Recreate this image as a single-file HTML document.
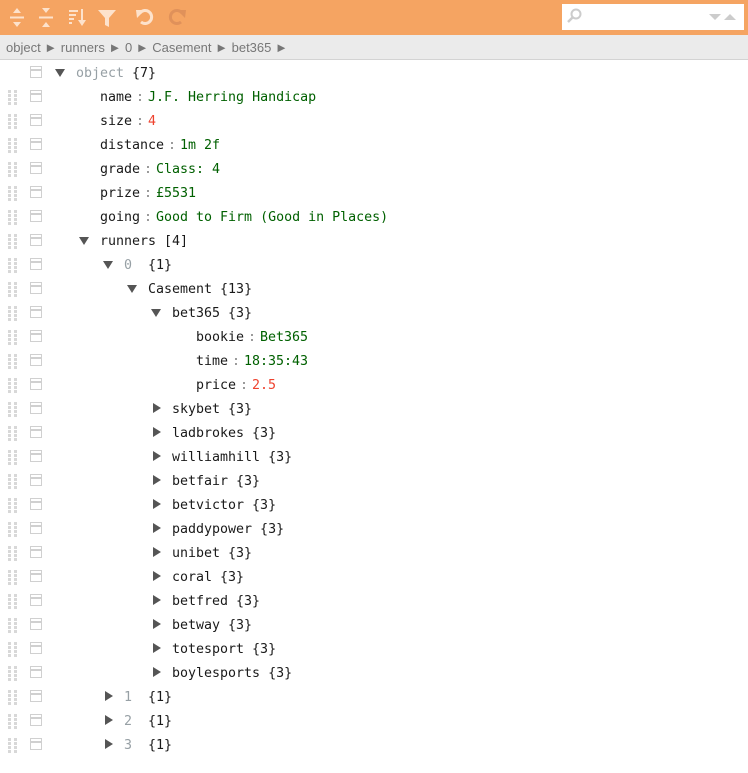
<!DOCTYPE html>
<html><head><meta charset="utf-8"><style>
*{margin:0;padding:0;box-sizing:border-box}
body{width:748px;height:773px;background:#fff;overflow:hidden;font-family:"DejaVu Sans Mono",monospace;font-size:13.3px;color:#1a1a1a;position:relative}
.tb{position:absolute;left:0;top:0;width:748px;height:35px;background:#f5a462}
.search{position:absolute;left:562px;top:4px;width:182px;height:26px;background:#fff}
.bc{position:absolute;left:0;top:35px;width:748px;height:25px;background:#ebebeb;border-bottom:1px solid #d3d3d3;font-family:"Liberation Sans",sans-serif;font-size:13px;color:#777;line-height:25px;padding-left:6px;white-space:pre}
.rows{position:absolute;left:0;top:60px;width:748px}
.r{position:relative;height:24px;line-height:24px;white-space:pre}
.r span{position:absolute;top:2px}
.dg{position:absolute;left:8px;top:6px;width:2.5px;height:2.5px;background:#d8d8d8;box-shadow:6px 0 #d8d8d8,0 4px #d8d8d8,6px 4px #d8d8d8,0 8px #d8d8d8,6px 8px #d8d8d8,0 12px #d8d8d8,6px 12px #d8d8d8}
.cb{position:absolute;left:30px;top:6px;width:12px;height:12px;border:1.5px solid #d0d0d0}
.cb:after{content:"";position:absolute;left:0;right:0;top:2px;height:1.5px;background:#d0d0d0}
.td,.tr{position:absolute;width:0;height:0}
.td{top:9px;border-left:5px solid transparent;border-right:5px solid transparent;border-top:8px solid #555}
.tr{top:7px;border-top:5px solid transparent;border-bottom:5px solid transparent;border-left:8px solid #555}
.s{color:#006000}.n{color:#ee422e}.g{color:#97a0a5}.sep{color:#888;width:16px;text-align:center}
</style></head><body>
<div class="tb">
<svg width="200" height="35" style="position:absolute;left:0;top:0">
<g fill="#fde2cc" stroke="#fde2cc">
<path d="M10 17.5h14" stroke-width="2"/><path d="M13 13l4-5 4 5z M13 22l4 5 4-5z" stroke="none"/>
<path d="M39 17.5h14" stroke-width="2"/><path d="M42 8l4 5 4-5z M42 27l4-5 4 5z" stroke="none"/>
<path d="M69 11h9M69 15h7M69 19h5M69 23h3" stroke-width="2"/><path d="M82 9v15" stroke-width="2"/><path d="M78 20l4 6 4-6z" stroke="none"/>
<path d="M98 10h18l-7 8v9l-4-2v-7z" stroke="none"/>
<path d="M140 13a6.5 6.5 0 1 1 1 9" fill="none" stroke-width="3"/><path d="M136 10l9 0-8 8z" stroke="none"/>
</g>
<g fill="#e0915a" stroke="#e0915a">
<path d="M182 13a6.5 6.5 0 1 0 -1 9" fill="none" stroke-width="3"/><path d="M186 10l-9 0 8 8z" stroke="none"/>
</g>
</svg>
<div class="search">
<svg width="182" height="26" style="position:absolute;left:0;top:0"><circle cx="14" cy="10" r="4.5" fill="none" stroke="#ccc" stroke-width="2"/><path d="M11 13l-5 5" stroke="#ccc" stroke-width="2.5"/><path d="M147 10h12l-6 6z M162 16h12l-6-6z" fill="#ccc"/></svg>
</div>
</div>
<div class="bc">object ► runners ► 0 ► Casement ► bet365 ►</div>
<div class="rows">
<div class="r"><div class="cb"></div><div class="td" style="left:55px"></div><span class="g" style="left:76px">object</span><span style="left:132px">{7}</span></div>
<div class="r"><div class="dg"></div><div class="cb"></div><span style="left:100px">name</span><span class="sep" style="left:132px">:</span><span class="s" style="left:148px">J.F. Herring Handicap</span></div>
<div class="r"><div class="dg"></div><div class="cb"></div><span style="left:100px">size</span><span class="sep" style="left:132px">:</span><span class="n" style="left:148px">4</span></div>
<div class="r"><div class="dg"></div><div class="cb"></div><span style="left:100px">distance</span><span class="sep" style="left:164px">:</span><span class="s" style="left:180px">1m 2f</span></div>
<div class="r"><div class="dg"></div><div class="cb"></div><span style="left:100px">grade</span><span class="sep" style="left:140px">:</span><span class="s" style="left:156px">Class: 4</span></div>
<div class="r"><div class="dg"></div><div class="cb"></div><span style="left:100px">prize</span><span class="sep" style="left:140px">:</span><span class="s" style="left:156px">£5531</span></div>
<div class="r"><div class="dg"></div><div class="cb"></div><span style="left:100px">going</span><span class="sep" style="left:140px">:</span><span class="s" style="left:156px">Good to Firm (Good in Places)</span></div>
<div class="r"><div class="dg"></div><div class="cb"></div><div class="td" style="left:79px"></div><span style="left:100px">runners [4]</span></div>
<div class="r"><div class="dg"></div><div class="cb"></div><div class="td" style="left:103px"></div><span class="g" style="left:124px">0</span><span style="left:148px">{1}</span></div>
<div class="r"><div class="dg"></div><div class="cb"></div><div class="td" style="left:127px"></div><span style="left:148px">Casement {13}</span></div>
<div class="r"><div class="dg"></div><div class="cb"></div><div class="td" style="left:151px"></div><span style="left:172px">bet365 {3}</span></div>
<div class="r"><div class="dg"></div><div class="cb"></div><span style="left:196px">bookie</span><span class="sep" style="left:244px">:</span><span class="s" style="left:260px">Bet365</span></div>
<div class="r"><div class="dg"></div><div class="cb"></div><span style="left:196px">time</span><span class="sep" style="left:228px">:</span><span class="s" style="left:244px">18:35:43</span></div>
<div class="r"><div class="dg"></div><div class="cb"></div><span style="left:196px">price</span><span class="sep" style="left:236px">:</span><span class="n" style="left:252px">2.5</span></div>
<div class="r"><div class="dg"></div><div class="cb"></div><div class="tr" style="left:153px"></div><span style="left:172px">skybet {3}</span></div>
<div class="r"><div class="dg"></div><div class="cb"></div><div class="tr" style="left:153px"></div><span style="left:172px">ladbrokes {3}</span></div>
<div class="r"><div class="dg"></div><div class="cb"></div><div class="tr" style="left:153px"></div><span style="left:172px">williamhill {3}</span></div>
<div class="r"><div class="dg"></div><div class="cb"></div><div class="tr" style="left:153px"></div><span style="left:172px">betfair {3}</span></div>
<div class="r"><div class="dg"></div><div class="cb"></div><div class="tr" style="left:153px"></div><span style="left:172px">betvictor {3}</span></div>
<div class="r"><div class="dg"></div><div class="cb"></div><div class="tr" style="left:153px"></div><span style="left:172px">paddypower {3}</span></div>
<div class="r"><div class="dg"></div><div class="cb"></div><div class="tr" style="left:153px"></div><span style="left:172px">unibet {3}</span></div>
<div class="r"><div class="dg"></div><div class="cb"></div><div class="tr" style="left:153px"></div><span style="left:172px">coral {3}</span></div>
<div class="r"><div class="dg"></div><div class="cb"></div><div class="tr" style="left:153px"></div><span style="left:172px">betfred {3}</span></div>
<div class="r"><div class="dg"></div><div class="cb"></div><div class="tr" style="left:153px"></div><span style="left:172px">betway {3}</span></div>
<div class="r"><div class="dg"></div><div class="cb"></div><div class="tr" style="left:153px"></div><span style="left:172px">totesport {3}</span></div>
<div class="r"><div class="dg"></div><div class="cb"></div><div class="tr" style="left:153px"></div><span style="left:172px">boylesports {3}</span></div>
<div class="r"><div class="dg"></div><div class="cb"></div><div class="tr" style="left:105px"></div><span class="g" style="left:124px">1</span><span style="left:148px">{1}</span></div>
<div class="r"><div class="dg"></div><div class="cb"></div><div class="tr" style="left:105px"></div><span class="g" style="left:124px">2</span><span style="left:148px">{1}</span></div>
<div class="r"><div class="dg"></div><div class="cb"></div><div class="tr" style="left:105px"></div><span class="g" style="left:124px">3</span><span style="left:148px">{1}</span></div>
</div>
</body></html>
